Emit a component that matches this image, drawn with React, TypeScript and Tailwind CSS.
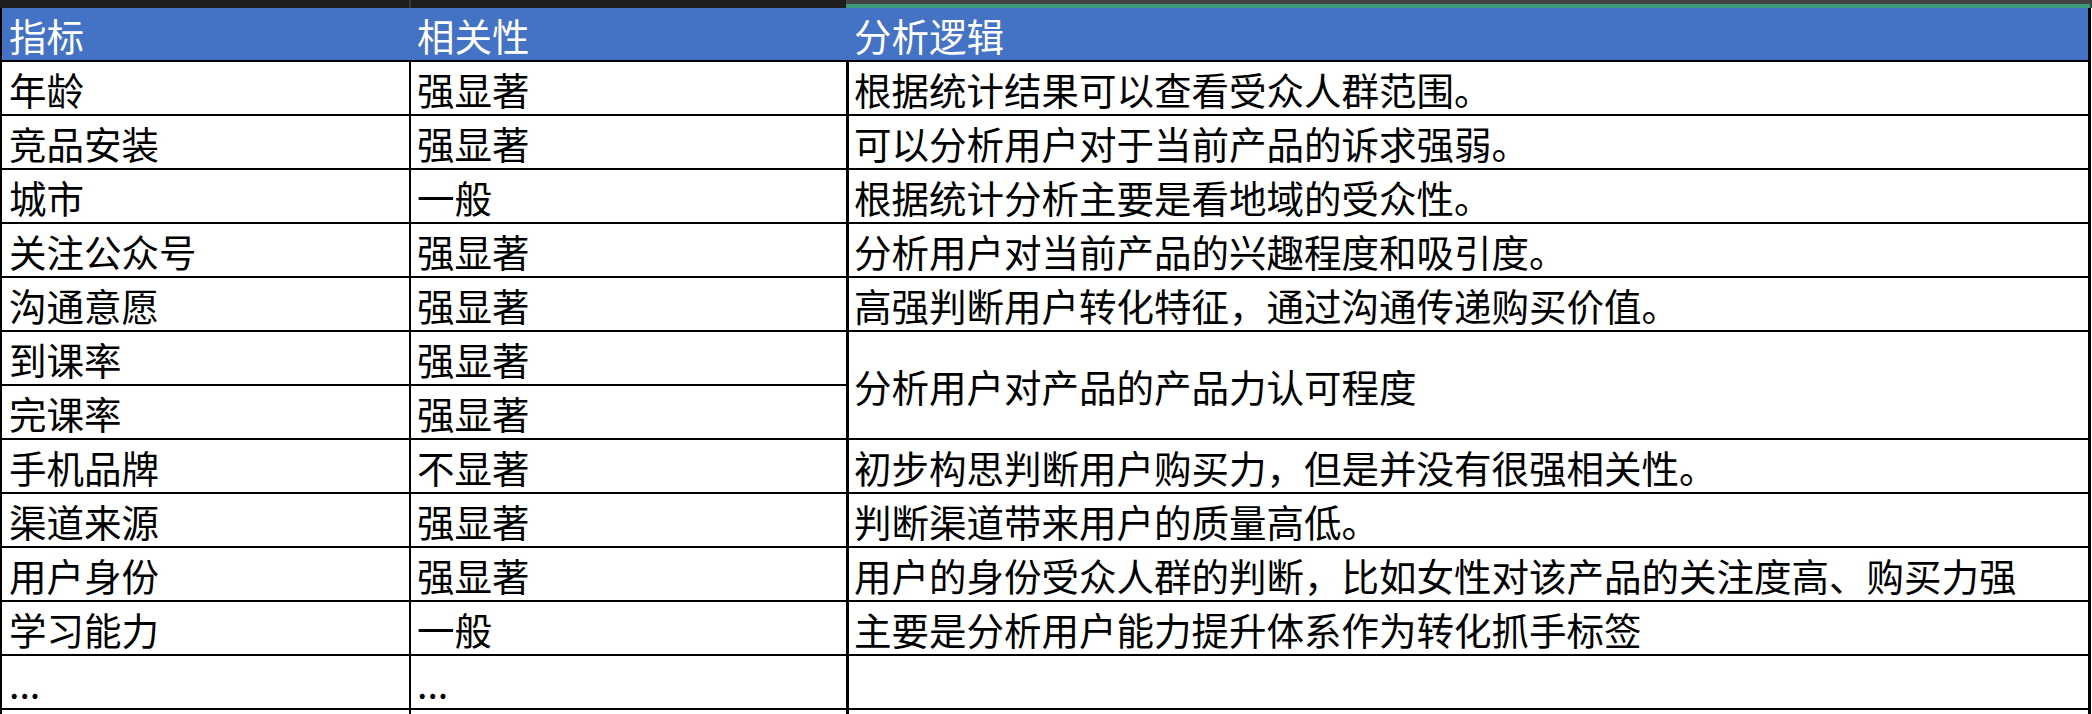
import React from "react";

type Row = { a: string; b: string; c?: string; merged?: boolean; skip?: boolean };

const rows: Row[] = [
  { a: "年龄", b: "强显著", c: "根据统计结果可以查看受众人群范围。" },
  { a: "竞品安装", b: "强显著", c: "可以分析用户对于当前产品的诉求强弱。" },
  { a: "城市", b: "一般", c: "根据统计分析主要是看地域的受众性。" },
  { a: "关注公众号", b: "强显著", c: "分析用户对当前产品的兴趣程度和吸引度。" },
  { a: "沟通意愿", b: "强显著", c: "高强判断用户转化特征，通过沟通传递购买价值。" },
  { a: "到课率", b: "强显著", c: "分析用户对产品的产品力认可程度", merged: true },
  { a: "完课率", b: "强显著", skip: true },
  { a: "手机品牌", b: "不显著", c: "初步构思判断用户购买力，但是并没有很强相关性。" },
  { a: "渠道来源", b: "强显著", c: "判断渠道带来用户的质量高低。" },
  { a: "用户身份", b: "强显著", c: "用户的身份受众人群的判断，比如女性对该产品的关注度高、购买力强" },
  { a: "学习能力", b: "一般", c: "主要是分析用户能力提升体系作为转化抓手标签" },
  { a: "...", b: "...", c: "" },
  { a: "", b: "", c: "" },
];

const font = { fontFamily: '"Noto Sans CJK SC", "Noto Sans", sans-serif' };

export default function App() {
  return (
    <div
      className="w-[2092px] h-[714px] overflow-hidden bg-white text-black text-[37.5px] leading-none"
      style={font}
    >
      {/* top band */}
      <div className="flex h-[8px]">
        <div className="w-[409px] bg-[#1e1e1e]" />
        <div className="w-[2px] bg-[#3a3a3a]" />
        <div className="w-[435px] bg-[#1e1e1e]" />
        <div className="w-[1244px] flex flex-col">
          <div className="h-[4px] bg-[#434343]" />
          <div className="h-[4px] bg-[#3f9b77]" />
        </div>
        <div className="flex-1 bg-[#444444]" />
      </div>

      <div className="w-[2091px] border-l-2 border-black">
        {/* header */}
        <div className="grid grid-cols-[409px_438px_1242px] h-[54px] bg-[#4472c4] border-b-2 border-black text-white">
          <div className="flex items-center pl-[7px] pt-[1px]">指标</div>
          <div className="flex items-center pl-[6px] pt-[1px]">相关性</div>
          <div className="flex items-center pl-[5px] pt-[1px] border-r-[3px] border-black">分析逻辑</div>
        </div>

        {/* body */}
        <div className="grid grid-cols-[409px_438px_1242px] auto-rows-[54px]">
          {rows.map((r, i) => (
            <React.Fragment key={i}>
              <div className="flex items-center pl-[7px] pt-[2px] border-r-2 border-b-2 border-black whitespace-nowrap">
                {r.a}
              </div>
              <div className="flex items-center pl-[6px] pt-[2px] border-r-[3px] border-b-2 border-black whitespace-nowrap">
                {r.b}
              </div>
              {!r.skip && (
                <div
                  className={
                    r.merged
                      ? "row-span-2 flex items-center pl-[5px] pt-[2px] border-r-[3px] border-b-2 border-black whitespace-nowrap"
                      : "flex items-center pl-[5px] pt-[2px] border-r-[3px] border-b-2 border-black whitespace-nowrap"
                  }
                >
                  {r.c}
                </div>
              )}
            </React.Fragment>
          ))}
        </div>
      </div>
    </div>
  );
}
